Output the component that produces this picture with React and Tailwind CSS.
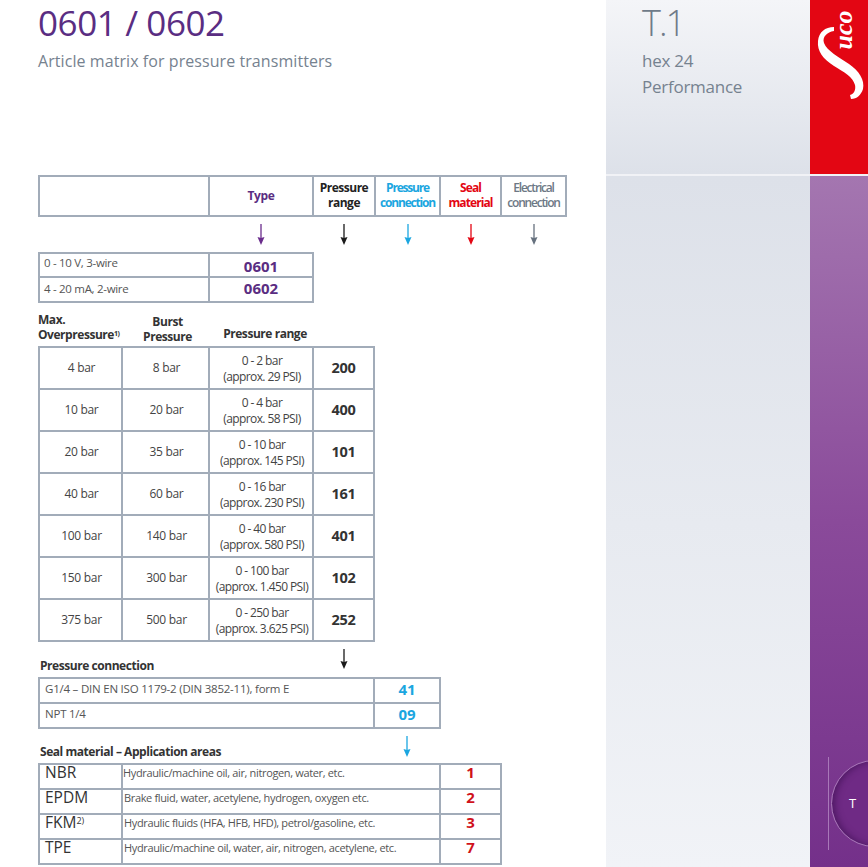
import React from "react";

const Arrow = ({ color, h = 21 }) => (
  <svg width="10" height={h} viewBox={`0 0 10 ${h}`} className="block">
    <path d={`M5 0V${h - 6}`} stroke={color} strokeWidth="1.3" />
    <path d={`M1.5 ${h - 8}L5 ${h}L8.5 ${h - 8}L5 ${h - 7}Z`} fill={color} />
  </svg>
);

const rangeRows = [
  ["4 bar", "8 bar", "0 - 2 bar", "(approx. 29 PSI)", "200"],
  ["10 bar", "20 bar", "0 - 4 bar", "(approx. 58 PSI)", "400"],
  ["20 bar", "35 bar", "0 - 10 bar", "(approx. 145 PSI)", "101"],
  ["40 bar", "60 bar", "0 - 16 bar", "(approx. 230 PSI)", "161"],
  ["100 bar", "140 bar", "0 - 40 bar", "(approx. 580 PSI)", "401"],
  ["150 bar", "300 bar", "0 - 100 bar", "(approx. 1.450 PSI)", "102"],
  ["375 bar", "500 bar", "0 - 250 bar", "(approx. 3.625 PSI)", "252"],
];

const sealRows = [
  ["NBR", null, "Hydraulic/machine oil, air, nitrogen, water, etc.", "1", "pl-0"],
  ["EPDM", null, "Brake fluid, water, acetylene, hydrogen, oxygen etc.", "2", "pl-[1px]"],
  ["FKM", "2)", "Hydraulic fluids (HFA, HFB, HFD), petrol/gasoline, etc.", "3", "pl-[1px]"],
  ["TPE", null, "Hydraulic/machine oil, water, air, nitrogen, acetylene, etc.", "7", "pl-[1px]"],
];

const border = "border-2 border-[#a2acb9]";
const line = "border-[#a2acb9]";

export default function App() {
  return (
    <div className="flex w-[868px] h-[867px] overflow-hidden bg-white font-['Open_Sans','Noto_Sans',sans-serif] text-[#3c3c3c]">
      {/* page content */}
      <div className="w-[606px] shrink-0 pl-[38px]">
        <h1 className="text-[35px] leading-[46px] text-[#5a2d82] tracking-[-0.4px]">0601 / 0602</h1>
        <h2 className="mt-[4px] text-[16px] leading-[22px] font-medium text-[#76828f] tracking-[0.07px] whitespace-nowrap">
          Article matrix for pressure transmitters
        </h2>

        {/* column heads */}
        <div className={`mt-[103px] flex w-[529px] h-[42px] ${border} text-[12px] leading-[15px] font-bold text-center`}>
          <div className={`w-[170px] border-r-2 ${line}`}></div>
          <div className={`w-[104px] border-r-2 ${line} flex items-center justify-center pb-[2px] text-[#5a2d82] tracking-[-0.4px]`}>Type</div>
          <div className={`w-[62px] border-r-2 ${line} flex items-center justify-center pb-[2px] text-[#222] tracking-[-0.5px]`}>Pressure<br />range</div>
          <div className={`w-[65px] border-r-2 ${line} flex items-center justify-center pb-[2px] text-[#1ba6e0] tracking-[-1.2px]`}>Pressure<br />connection</div>
          <div className={`w-[61px] border-r-2 ${line} flex items-center justify-center pb-[2px] text-[#e30613] tracking-[-0.9px]`}>Seal<br />material</div>
          <div className="flex-1 flex items-center justify-center pb-[2px] text-[#6d7885] font-semibold tracking-[-1.2px]">Electrical<br />connection</div>
        </div>

        {/* arrows */}
        <div className="flex h-[35px] pt-[7px]">
          <div className="w-[171px]"></div>
          <div className="w-[104px] flex justify-center"><Arrow color="#6a2c8c" /></div>
          <div className="w-[62px] flex justify-center"><Arrow color="#1a1a1a" /></div>
          <div className="w-[65px] flex justify-center"><Arrow color="#1ba6e0" /></div>
          <div className="w-[61px] flex justify-center"><Arrow color="#e30613" /></div>
          <div className="w-[66px] flex justify-center"><Arrow color="#66717e" /></div>
        </div>

        {/* type */}
        <div className={`w-[276px] ${border}`}>
          {[["0 - 10 V, 3-wire", "0601"], ["4 - 20 mA, 2-wire", "0602"]].map(([label, code], i) => (
            <div key={code} className={`flex ${i ? `h-[25px] border-t-2 ${line}` : "h-[22px]"}`}>
              <div className={`w-[170px] border-r-2 ${line} pl-[4px] text-[11.5px] tracking-[-0.3px] text-[#555] ${i ? "leading-[21px]" : "leading-[18px]"}`}>{label}</div>
              <div className={`flex-1 text-center text-[15px] font-bold text-[#5a2d82] ${i ? "leading-[21px]" : "leading-[24px]"}`}>{code}</div>
            </div>
          ))}
        </div>

        {/* pressure range */}
        <div className="mt-[8px] flex h-[35px] items-end text-[12px] leading-[15px] font-bold text-[#333] tracking-[-0.45px]">
          <div className="w-[84px] shrink-0 whitespace-nowrap pb-[4px]">Max.<br />Overpressure<sup className="text-[7px] leading-none">1)</sup></div>
          <div className="w-[91px] text-center pb-[2px]">Burst<br />Pressure</div>
          <div className="w-[104px] text-center pb-[5px] whitespace-nowrap">Pressure range</div>
        </div>
        <div className={`w-[337px] ${border}`}>
          {rangeRows.map((r, i) => (
            <div key={r[4]} className={`flex ${i ? `h-[42px] border-t-2 ${line}` : "h-[40px]"} text-[12px] text-[#444] tracking-[-0.3px]`}>
              <div className={`w-[83px] border-r-2 ${line} flex items-center justify-center pl-[2px]`}>{r[0]}</div>
              <div className={`w-[87px] border-r-2 ${line} flex items-center justify-center pl-[2px]`}>{r[1]}</div>
              <div className={`w-[104px] border-r-2 ${line} flex items-center justify-center pl-[2px] pt-[2px] text-center leading-[16px] whitespace-nowrap tracking-[-0.6px]`}>
                <span>{r[2]}<br />{r[3]}</span>
              </div>
              <div className="flex-1 flex items-center justify-center text-[14.5px] font-bold text-[#333]">{r[4]}</div>
            </div>
          ))}
        </div>

        {/* pressure connection */}
        <div className="flex h-[28px] mt-[7px]">
          <div className="w-[301px] pt-[9px] pl-[2px] text-[12px] leading-[16px] font-bold text-[#333] tracking-[-0.45px] whitespace-nowrap">
            Pressure connection
          </div>
          <div className="w-[10px]"><Arrow color="#1a1a1a" h={20} /></div>
        </div>
        <div className={`w-[403px] ${border}`}>
          {[["G1/4 – DIN EN ISO 1179-2 (DIN 3852-11), form E", "41"], ["NPT 1/4", "09"]].map(([label, code], i) => (
            <div key={code} className={`flex ${i ? `h-[25px] border-t-2 ${line}` : "h-[23px]"}`}>
              <div className={`w-[335px] border-r-2 ${line} pl-[5px] text-[11.5px] leading-[20px] tracking-[-0.22px] text-[#555]`}>{label}</div>
              <div className="flex-1 text-center text-[15px] leading-[21px] font-bold text-[#1ba6e0]">{code}</div>
            </div>
          ))}
        </div>

        {/* seal material */}
        <div className="flex h-[27px] mt-[7px]">
          <div className="w-[364px] pt-[8px] pl-[2px] text-[12px] leading-[16px] font-bold text-[#333] tracking-[-0.45px] whitespace-nowrap">
            Seal material – Application areas
          </div>
          <div className="w-[10px]"><Arrow color="#1ba6e0" h={21} /></div>
        </div>
        <div className={`w-[464px] ${border}`}>
          {sealRows.map((r, i) => (
            <div key={r[0]} className={`flex ${i ? `h-[25px] border-t-2 ${line}` : "h-[23px]"}`}>
              <div className={`w-[83px] border-r-2 ${line} pl-[5px] text-[15.5px] leading-[15px] text-[#333]`}>
                {r[0]}{r[1] && <sup className="text-[9px] leading-none">{r[1]}</sup>}
              </div>
              <div className={`w-[318px] border-r-2 ${line} ${r[4]} text-[11px] leading-[16px] tracking-[-0.35px] text-[#555] whitespace-nowrap`}>{r[2]}</div>
              <div className="flex-1 text-center text-[15px] leading-[15px] font-bold text-[#d0121b]">{r[3]}</div>
            </div>
          ))}
        </div>
      </div>

      {/* gray side column */}
      <div className="w-[204px] shrink-0 flex flex-col">
        <div className="h-[174px] pl-[36px] bg-gradient-to-b from-[#f4f5f8] to-[#dde1e9] text-[#76828f]">
          <div className="text-[36px] leading-[46px] font-light tracking-[-2px] text-[#6f7b89]">T.1</div>
          <div className="mt-[2px] text-[17px] leading-[26px] font-medium tracking-[-0.25px]">hex 24<br />Performance</div>
        </div>
        <div className="h-[2px] bg-[#f1f2f6]"></div>
        <div className="flex-1 bg-gradient-to-b from-[#dde1e9] to-[#f1f3f7]"></div>
      </div>

      {/* red logo + purple strip */}
      <div className="w-[58px] shrink-0 flex flex-col">
        <div className="relative h-[174px] bg-[#e30613] overflow-hidden">
          <svg width="58" height="110" viewBox="0 0 58 110" className="absolute left-0 top-0">
            <path d="M24 27L24 31C17 32 12 37 14 43C17 51 29 57 39 64C49 71 55 80 53 89C51 95 47 99 41 99L40 95C44 94 46 90 45 85C43 77 34 72 24 66C13 59 7 51 8 41C9 32 15 27 24 27Z" fill="#fff" />
          </svg>
          <div className="absolute left-[4px] top-[15px] w-[60px] h-[30px] text-center -rotate-90 font-['Liberation_Serif',serif] italic font-bold text-[26px] leading-[30px] text-white">uco</div>
        </div>
        <div className="h-[2px] bg-[#f1f2f6]"></div>
        <div className="relative flex-1 bg-gradient-to-b from-[#a476b0] via-[#8a4a9a] to-[#74308a] overflow-hidden">
          <div className="absolute left-[18px] top-[581px] h-[93px] w-px bg-[#a878b8]"></div>
          <div className="absolute left-[21px] top-[584px] w-[87px] h-[87px] rounded-full bg-[#6f2a85] border border-[#a878b8] shadow-[inset_3px_0_6px_rgba(50,10,70,0.5)]"></div>
          <div className="absolute left-[39px] top-[619px] text-[13px] leading-[16px] font-medium text-white">T</div>
        </div>
      </div>
    </div>
  );
}
